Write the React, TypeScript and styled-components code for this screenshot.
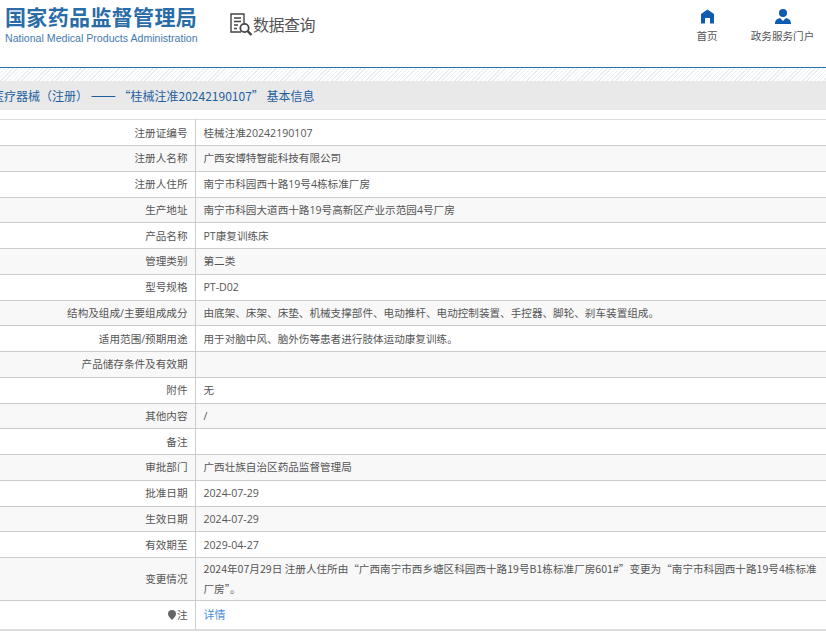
import React from 'react'
import styled, { createGlobalStyle } from 'styled-components'

const GlobalStyle = createGlobalStyle`
  html, body {
    margin: 0;
    padding: 0;
    background: #fff;
    overflow: hidden;
  }
  body {
    font-family: 'Open Sans', 'Noto Sans CJK SC', sans-serif;
    font-size: 12px;
    color: #555;
  }
`

const Page = styled.div`
  width: 826px;
  height: 636px;
  overflow: hidden;
`

const Header = styled.header`
  height: 67px;
  display: flex;
  align-items: flex-start;
  border-bottom: 1px solid #2475a8;
`

const Logo = styled.div`
  width: 192px;
  margin: 2px 0 0 5px;
`

const LogoName = styled.div`
  font-family: 'Noto Sans CJK SC', sans-serif;
  font-size: 21px;
  font-weight: 700;
  line-height: 28px;
  letter-spacing: 0.35px;
  white-space: nowrap;
  color: #2a6ca8;
`

const LogoEnglish = styled.div`
  font-family: 'Liberation Sans', sans-serif;
  font-size: 10.6px;
  line-height: 13px;
  margin-top: 2px;
  white-space: nowrap;
  color: #3f7bb0;
`

const Query = styled.div`
  display: flex;
  align-items: center;
  margin: 12px 0 0 32px;
  font-family: 'Noto Sans CJK SC', sans-serif;
  font-size: 16px;
  letter-spacing: -0.5px;
  line-height: 24px;
  color: #555;
`

const Nav = styled.nav`
  margin-left: auto;
  display: flex;
  margin-top: 9px;
`

const NavItem = styled.div<{ $width: number }>`
  width: ${(p) => p.$width}px;
  display: flex;
  flex-direction: column;
  align-items: center;
  font-size: 10.6px;
  line-height: 16px;
  color: #555;
  white-space: nowrap;
  svg {
    margin-bottom: 4px;
  }
`

const Hatch = styled.div`
  height: 13px;
  background: repeating-linear-gradient(135deg, #e9eef0 0 1px, #fff 1px 3px);
`

const TitleBar = styled.h1`
  margin: 0 0 9.25px;
  height: 29px;
  background: #e9e9e9;
  font-family: 'Noto Sans CJK SC', sans-serif;
  font-size: 12px;
  font-weight: 400;
  line-height: 29px;
  color: #1f5f9e;
  white-space: pre;
  text-indent: -8px;
`

const Dash = styled.span`
  font-size: 15px;
  line-height: 20px;
`

const Table = styled.table`
  width: 826px;
  table-layout: fixed;
  border-collapse: collapse;
  border-top: 1px solid #ddd;
  font-size: 10.6px;
`

const Row = styled.tr`
  border-bottom: 1px solid #ccc;
  &:nth-child(even) {
    background: #f8f8f8;
  }
  &:last-child {
    border-bottom: 2px solid #ddd;
  }
  &:last-child td {
    height: 26px;
  }
`

const Label = styled.td`
  height: 24.75px;
  padding: 0 7px 0 0;
  text-align: right;
  border-right: 1px solid #ccc;
  line-height: 20px;
  color: #555;
`

const Value = styled.td`
  padding: 1px 0 1px 8px;
  line-height: 20px;
  color: #555;
`

const ChangeText = styled.span`
  font-family: 'Noto Sans CJK SC', sans-serif;
`

const DetailLink = styled.a`
  color: #4a90d9;
  font-size: 11px;
  text-decoration: none;
`

const NoteMark = styled.svg`
  width: 8px;
  height: 10px;
  margin-right: 1px;
  vertical-align: -1px;
`

const rows: [string, React.ReactNode][] = [
  ['注册证编号', '桂械注准20242190107'],
  ['注册人名称', '广西安博特智能科技有限公司'],
  ['注册人住所', '南宁市科园西十路19号4栋标准厂房'],
  ['生产地址', '南宁市科园大道西十路19号高新区产业示范园4号厂房'],
  ['产品名称', 'PT康复训练床'],
  ['管理类别', '第二类'],
  ['型号规格', 'PT-D02'],
  ['结构及组成/主要组成成分', '由底架、床架、床垫、机械支撑部件、电动推杆、电动控制装置、手控器、脚轮、刹车装置组成。'],
  ['适用范围/预期用途', '用于对脑中风、脑外伤等患者进行肢体运动康复训练。'],
  ['产品储存条件及有效期', ''],
  ['附件', '无'],
  ['其他内容', '/'],
  ['备注', ''],
  ['审批部门', '广西壮族自治区药品监督管理局'],
  ['批准日期', '2024-07-29'],
  ['生效日期', '2024-07-29'],
  ['有效期至', '2029-04-27'],
  [
    '变更情况',
    <ChangeText>
      2024年07月29日 注册人住所由“广西南宁市西乡塘区科园西十路19号B1栋标准厂房601#”变更为“南宁市科园西十路19号4栋标准厂房”。
    </ChangeText>,
  ],
  ['注', <DetailLink href="#">详情</DetailLink>],
]

const QueryIcon = () => (
  <svg width="24" height="24" viewBox="0 0 24 24" fill="none" stroke="#444" strokeWidth="1.4">
    <path d="M12 20H2V2h13v9" />
    <path d="M5 6h7M5 9.5h7M5 13h4M5 16.5h3" />
    <circle cx="15.5" cy="16" r="4.2" strokeWidth="1.8" />
    <path d="M18.5 19l4 4" strokeWidth="2.4" />
  </svg>
)

const HomeIcon = () => (
  <svg width="15" height="15" viewBox="0 0 15 15" fill="#0d5cb0">
    <path d="M7.5 0.5L14 5v9.5h-4V9H5v5.5H1V5z" />
  </svg>
)

const UserIcon = () => (
  <svg width="16" height="15" viewBox="0 0 16 15" fill="#0d5cb0">
    <circle cx="8" cy="4" r="4" />
    <path d="M0 15c0-3 1-5 5-6l3 3 3-3c4 1 5 3 5 6z" />
  </svg>
)

const Balloon = () => (
  <NoteMark viewBox="0 0 8 10" fill="#666">
    <path d="M4 0a4 4 0 0 1 4 4c0 2-2 4-4 6-2-2-4-4-4-6a4 4 0 0 1 4-4z" />
  </NoteMark>
)

export default function App() {
  return (
    <Page>
      <GlobalStyle />
      <Header>
        <Logo>
          <LogoName>国家药品监督管理局</LogoName>
          <LogoEnglish>National Medical Products Administration</LogoEnglish>
        </Logo>
        <Query>
          <QueryIcon />
          数据查询
        </Query>
        <Nav>
          <NavItem $width={64}>
            <HomeIcon />
            首页
          </NavItem>
          <NavItem $width={87}>
            <UserIcon />
            政务服务门户
          </NavItem>
        </Nav>
      </Header>
      <Hatch />
      <TitleBar>
        医疗器械（注册） <Dash>——</Dash> “桂械注准20242190107” 基本信息
      </TitleBar>
      <Table>
        <colgroup>
          <col style={{ width: 195 }} />
          <col />
        </colgroup>
        <tbody>
          {rows.map(([label, value]) => (
            <Row key={label}>
              <Label>
                {label === '注' && <Balloon />}
                {label}
              </Label>
              <Value>{value}</Value>
            </Row>
          ))}
        </tbody>
      </Table>
    </Page>
  )
}
